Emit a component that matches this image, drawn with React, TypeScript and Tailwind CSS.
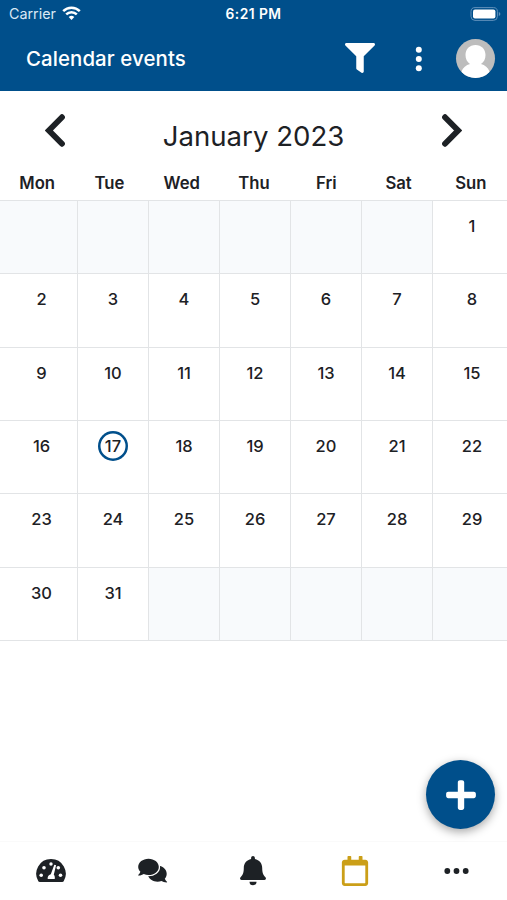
import { FaFilter, FaPlus, FaRegCalendar } from 'react-icons/fa';

const WEEKDAYS = ['Mon', 'Tue', 'Wed', 'Thu', 'Fri', 'Sat', 'Sun'];
const FIRST_DAY_OFFSET = 6;
const DAYS_IN_MONTH = 31;
const TODAY = 17;

const cells = Array.from({ length: 42 }, (_, i) => {
  const day = i - FIRST_DAY_OFFSET + 1;
  return day >= 1 && day <= DAYS_IN_MONTH ? day : null;
});

function Chevron({ className }: { className?: string }) {
  return (
    <svg width="20" height="33" viewBox="0 0 20 33" fill="none" className={className}>
      <path d="M17 3.2 3.9 16.5 17 29.8" stroke="currentColor" strokeWidth="5.8" strokeLinecap="round" />
    </svg>
  );
}

function GaugeIcon() {
  return (
    <svg width="30" height="30" viewBox="0 0 30 30" fill="currentColor">
      <path d="M15 3A14.7 14.7 0 0 1 27.7 25.2q-.5.8-1.500.8H3.800q-1 0-1.500-.8A14.700 14.700 0 0 1 15 3z" />
      <g fill="white">
        <circle cx="5.2" cy="19.300" r="1.800" />
        <circle cx="8" cy="11.700" r="1.800" />
        <circle cx="15" cy="8" r="1.700" />
        <circle cx="22.300" cy="11.700" r="1.800" />
        <circle cx="24.500" cy="19.300" r="1.800" />
        <path d="M18.300 8.800l1.800.5-2.300 9.500c1 .7 1.300 3 .9 4.200h-7c-.3-2 .7-4.300 3.100-4.800z" />
      </g>
    </svg>
  );
}

function CommentsIcon() {
  return (
    <svg width="31" height="30" viewBox="0 0 31 30" fill="currentColor">
      <path d="M20.500 9.500c5 0 9.200 3.700 9.200 8.200 0 2-.7 3.700-1.900 5.100.5 1.300 1.300 2.300 2.400 3.100-.1.300-.3.500-.7.500-2 0-3.700-.6-5-1.400-1.200.5-2.600.7-4 .7-4.400 0-8-2.400-9.500-5.900z" />
      <path
        d="M11.500 2.800c5.700 0 10.300 3.600 10.300 8.100s-4.600 8.100-10.300 8.100c-1.700 0-3.300-.3-4.700-.9-1.400.9-3.100 1.500-5.100 1.500-.5 0-.7-.4-.5-.7 1-.9 1.800-2 2.200-3.200-1.400-1.400-2.200-3-2.200-4.800 0-4.500 4.600-8.100 10.300-8.100z"
        stroke="white"
        strokeWidth="2.600"
        paintOrder="stroke"
      />
    </svg>
  );
}

function BellIcon() {
  return (
    <svg width="30" height="30" viewBox="0 0 30 30" fill="currentColor">
      <path d="M15 0c1 0 1.900.8 1.900 1.900v1.200c4.300.9 7.300 4.300 7.300 9 0 5.500 1.500 7.500 3.200 9.200 1 1 .6 2.700-1 2.700H3.600c-1.600 0-2-1.700-1-2.700 1.700-1.700 3.200-3.700 3.200-9.200 0-4.700 3-8.100 7.300-9V1.900C13.100.8 14 0 15 0z" />
      <path d="M11.500 25.700h7a3.500 3.500 0 0 1-7 0z" />
    </svg>
  );
}

function StatusBar() {
  return (
    <div className="grid h-[27px] grid-cols-3 items-center leading-none">
      <div className="flex items-center gap-[6px] pl-[9px]">
        <span className="pt-px text-[14.3px] text-[#d9e8f5]">Carrier</span>
        <svg width="19" height="14" viewBox="0 0 19 14" fill="none" stroke="white" strokeWidth="2.5">
          <path d="M1.2 5.2a11.7 11.7 0 0 1 16.6 0" />
          <path d="M4.2 8.4a7.5 7.5 0 0 1 10.6 0" />
          <path d="M9.5 14 6.7 11.1a4 4 0 0 1 5.6 0z" fill="white" stroke="none" />
        </svg>
      </div>
      <span className="pt-[2px] text-center text-[13.8px] font-semibold tracking-[0.45px]">6:21 PM</span>
      <div className="flex justify-end pr-[6px]">
        <svg width="31" height="14" viewBox="0 0 31 14">
          <rect x="1" y=".6" width="26.4" height="12.8" rx="4" fill="none" stroke="#5f90ba" />
          <rect x="3" y="2.5" width="22.4" height="9" rx="2" fill="white" />
          <path d="M28.8 5v4q1.6-.6 1.6-2t-1.6-2z" fill="#5f90ba" />
        </svg>
      </div>
    </div>
  );
}

function Header() {
  return (
    <header className="h-[91px] bg-[#004f8b] text-white">
      <StatusBar />
      <div className="flex h-[63px] items-center pr-3 pl-[26px]">
        <h1 className="flex-1 pt-px text-[20.4px] font-medium tracking-[0.1px]">Calendar events</h1>
        <button aria-label="Filter" className="pb-px">
          <FaFilter size={30} />
        </button>
        <button aria-label="More options" className="mr-[34px] ml-[40px]">
          <svg width="7" height="26" viewBox="0 0 7 26" fill="currentColor">
            <circle cx="3.8" cy="3.8" r="3" />
            <circle cx="3.8" cy="13" r="3" />
            <circle cx="3.8" cy="22.2" r="3" />
          </svg>
        </button>
        <div className="size-[39px] overflow-hidden rounded-full bg-[#bdbdbd]">
          <svg viewBox="0 0 39 39" fill="white">
            <path d="M19.5 6c6 0 10 4.300 10 10 0 4-1.500 7-4.500 9 4 1 7 3.500 8.500 7.500L29 39H10l-4.500-6.500c1.500-4 4.500-6.500 8.500-7.500-3-2-4.500-5-4.500-9 0-5.700 4-10 10-10z" />
          </svg>
        </div>
      </div>
    </header>
  );
}

function Calendar() {
  return (
    <main className="flex-1">
      <div className="flex h-[78px] items-center justify-between px-[45px]">
        <button aria-label="Previous month" className="pt-px">
          <Chevron />
        </button>
        <h2 className="mt-[13px] text-[27.6px]">January 2023</h2>
        <button aria-label="Next month" className="pt-px">
          <Chevron className="rotate-180" />
        </button>
      </div>
      <div className="grid h-[31px] grid-cols-7 pt-[2px] pl-px text-center text-[16.7px] leading-6 font-semibold">
        {WEEKDAYS.map(name => (
          <span key={name}>{name}</span>
        ))}
      </div>
      <div className="grid grid-cols-[78px_repeat(5,71px)_1fr] grid-rows-[73px_74px_73px_73px_74px_73px] border-t border-[#e2e4e6]">
        {cells.map((day, i) => (
          <div
            key={i}
            className={`flex items-start justify-center border-b border-[#e2e4e6] pt-[10px] ${
              i % 7 === 0 ? 'pl-[6px]' : ''
            } ${i % 7 === 6 ? 'pl-1' : 'border-r'} ${day ? '' : 'bg-[#f8fafc]'}`}
          >
            {day && (
              <span
                className={`flex size-[30px] items-center justify-center rounded-full text-[16.5px] font-medium ${
                  day === TODAY ? 'shadow-[inset_0_0_0_2.5px_#004f8b]' : ''
                }`}
              >
                {day}
              </span>
            )}
          </div>
        ))}
      </div>
    </main>
  );
}

function TabBar() {
  return (
    <nav className="grid h-[59px] grid-cols-5 place-items-center border-t border-[#fafafa] bg-white">
      <GaugeIcon />
      <CommentsIcon />
      <BellIcon />
      <FaRegCalendar size={30} className="text-[#cb9f18]" />
      <svg width="26" height="8" viewBox="0 0 26 8" fill="currentColor">
        <circle cx="4.3" cy="4" r="2.9" />
        <circle cx="13.5" cy="4" r="2.9" />
        <circle cx="22.7" cy="4" r="2.9" />
      </svg>
    </nav>
  );
}

export default function App() {
  return (
    <div className="relative flex h-[900px] w-[507px] flex-col overflow-hidden bg-white font-['Inter',sans-serif] text-[#1d2125]">
      <Header />
      <Calendar />
      <TabBar />
      <button
        aria-label="New event"
        className="absolute right-3 bottom-[71px] flex size-[69px] items-center justify-center rounded-full bg-[#004f8b] text-white shadow-[0_3px_10px_rgba(0,0,0,0.35)]"
      >
        <FaPlus size={34} />
      </button>
    </div>
  );
}
